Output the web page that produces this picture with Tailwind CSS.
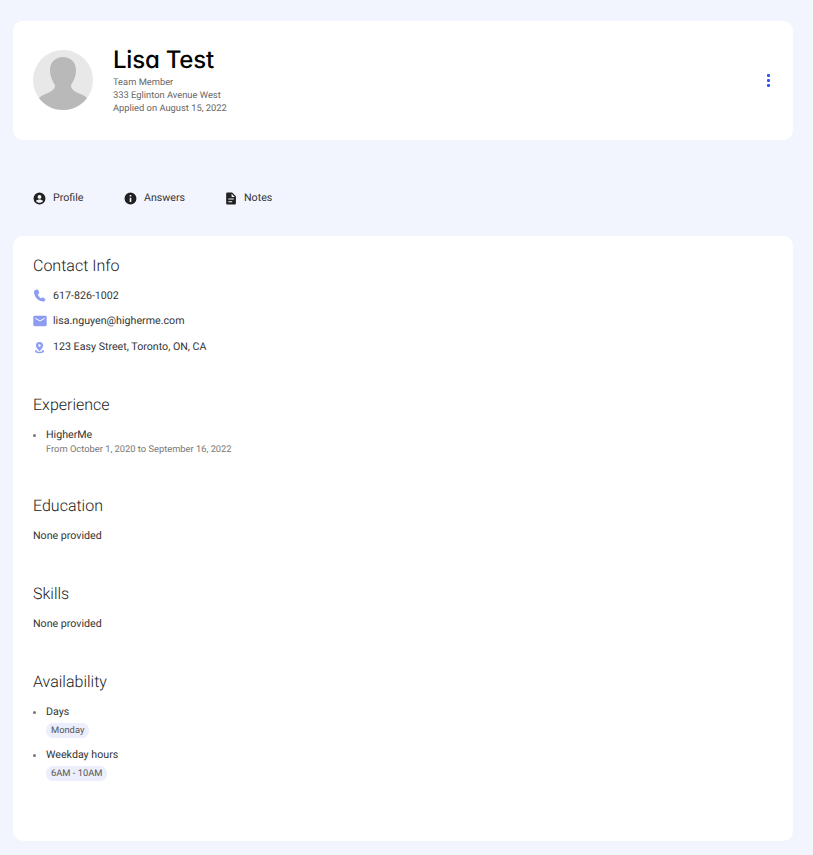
<!DOCTYPE html>
<html lang="en">
<head>
    <meta charset="UTF-8">
    <meta name="viewport" content="width=device-width, initial-scale=1.0">
    <title>Lisa Test - Profile</title>
    <script src="https://cdn.jsdelivr.net/npm/@tailwindcss/browser@4"></script>
</head>
<body class="bg-[#f2f5fe] font-['Roboto',sans-serif] text-[#212121] [text-rendering:geometricPrecision]">
    <div class="h-[855px] overflow-hidden pt-[21px] pl-[13px] pr-[20px]">
        <!-- Header card -->
        <div class="h-[119px] bg-white rounded-[10px] pl-[20px] pr-[23px] flex items-center">
            <svg class="w-[60px] h-[60px] shrink-0 -mt-[1px]" viewBox="0 0 60 60">
                <circle cx="30" cy="30" r="30" fill="#e8e8e8"/>
                <path d="M17 20 C17 12 23 7 30 7 C37 7 43 12 43 20 C43 27 40 32 38 35 C38 39 41 41 45 43 C49 44.500 52 46 54 48 C48.500 55.500 40 60 30 60 C20 60 11.500 55.500 6 48 C8 46 11 44.500 15 43 C19 41 22 39 22 35 C20 32 17 27 17 20 Z" fill="#b9b9b9"/>
            </svg>
            <div class="ml-[20px]">
                <h1 class="font-['Inter',sans-serif] font-medium text-[24px] tracking-[-0.2px] leading-[30px] text-black [font-feature-settings:'cv11']">Lisa Test</h1>
                <div class="mt-[2px] text-[9.33px] leading-[12.7px] text-[#666]">
                    <p>Team Member</p>
                    <p>333 Eglinton Avenue West</p>
                    <p>Applied on August 15, 2022</p>
                </div>
            </div>
            <div class="ml-auto flex flex-col gap-[2px] -mt-[1px]">
                <span class="w-[3px] h-[3px] rounded-[1px] bg-[#3355ee]"></span>
                <span class="w-[3px] h-[3px] rounded-[1px] bg-[#3355ee]"></span>
                <span class="w-[3px] h-[3px] rounded-[1px] bg-[#3355ee]"></span>
            </div>
        </div>

        <!-- Tabs -->
        <div class="h-[96px] pl-[20px] flex items-center text-[10.67px] text-[#333] pt-[20px]">
            <div class="flex items-center gap-[7px] w-[91px]">
                <svg class="w-[13px] h-[13px]" viewBox="0 0 24 24" fill="#212121">
                    <path fill-rule="evenodd" d="M12 1a11 11 0 1 0 0 22 11 11 0 0 0 0-22Zm0 4.500a3.500 3.500 0 1 1 0 7 3.500 3.500 0 0 1 0-7ZM12 20c-2.800 0-5.200-1.300-6.500-3.300 1.500-1.700 4-2.700 6.500-2.700s5 1 6.500 2.700C17.200 18.700 14.800 20 12 20Z"/>
                </svg>
                <span>Profile</span>
            </div>
            <div class="flex items-center gap-[7px] w-[100px]">
                <svg class="w-[13px] h-[13px]" viewBox="0 0 24 24" fill="#212121">
                    <path fill-rule="evenodd" d="M12 1a11 11 0 1 0 0 22 11 11 0 0 0 0-22Zm-1.500 4.500h3v3h-3v-3Zm0 5h3v8h-3v-8Z"/>
                </svg>
                <span>Answers</span>
            </div>
            <div class="flex items-center gap-[7px]">
                <svg class="w-[13px] h-[13px]" viewBox="0 0 24 24" fill="#212121">
                    <path fill-rule="evenodd" d="M6 1h9l7 7v13a2 2 0 0 1-2 2H6a2 2 0 0 1-2-2V3a2 2 0 0 1 2-2Zm8 2v6h6l-6-6ZM8 12v2h10v-2H8Zm0 5v2h7v-2H8Z"/>
                </svg>
                <span>Notes</span>
            </div>
        </div>

        <!-- Main card -->
        <div class="h-[605px] bg-white rounded-[10px] px-[20px] pt-[20px]">
            <section>
                <h2 class="text-[16px] leading-[19px] font-light">Contact Info</h2>
                <ul class="mt-[13px] text-[10.67px] text-[#333]">
                    <li class="h-[16px] flex items-center gap-[7px]">
                        <svg class="w-[13px] h-[13px] -mt-[1px]" viewBox="0 0 24 24" fill="#8c9cf0">
                            <path d="M6.600 1 2 3c-.6 5 1 10 5 14.500S17 23.500 21 23l2-4-5-4-3 2c-2.500-1-5.500-4.500-6-7l2.500-2.500L9.500 1.500Z"/>
                        </svg>
                        <span>617-826-1002</span>
                    </li>
                    <li class="h-[16px] mt-[9px] flex items-center gap-[7px]">
                        <svg class="w-[14px] h-[14px] -ml-[0.5px] -mr-[0.5px]" viewBox="0 0 24 24" fill="#8c9cf0">
                            <path fill-rule="evenodd" d="M3 3h18a2.500 2.500 0 0 1 2.500 2.500v13A2.500 2.500 0 0 1 21 21H3A2.500 2.500 0 0 1 .5 18.500v-13A2.500 2.500 0 0 1 3 3Zm1 5 8 5 8-5v-1.500l-8 4.500-8-4.500V8Z"/>
                        </svg>
                        <span>lisa.nguyen@higherme.com</span>
                    </li>
                    <li class="h-[16px] mt-[10px] flex items-center gap-[7px]">
                        <svg class="w-[13px] h-[13px]" viewBox="0 0 24 24" fill="#8c9cf0">
                            <path fill-rule="evenodd" d="M12 2a6.500 6.500 0 0 0-6.500 6.500C5.500 13 12 19 12 19s6.500-6 6.500-10.500A6.500 6.500 0 0 0 12 2Zm0 4.200a2.300 2.300 0 1 1 0 4.600 2.300 2.300 0 0 1 0-4.600ZM4 17.500l2.500-1 1.200 1.300-1.500.7c1 1 3.300 1.500 5.800 1.500s4.800-.5 5.800-1.500l-1.500-.7 1.200-1.300 2.500 1c.5.300.5 1 .5 1.500 0 2.500-4 3.500-8.500 3.500S3.500 21.500 3.500 19c0-.5 0-1.200.5-1.500Z"/>
                        </svg>
                        <span>123 Easy Street, Toronto, ON, CA</span>
                    </li>
                </ul>
            </section>

            <section class="mt-[40px]">
                <h2 class="text-[16px] leading-[19px] font-light">Experience</h2>
                <ul class="mt-[14px] text-[10.67px]">
                    <li class="flex">
                        <span class="w-[3px] h-[3px] mt-[6px] mr-[10px] rounded-full bg-[#777]"></span>
                        <div>
                            <p class="leading-[14px] text-[#333]">HigherMe</p>
                            <p class="mt-[1px] leading-[14px] text-[9.33px] text-[#777]">From October 1, 2020 to September 16, 2022</p>
                        </div>
                    </li>
                </ul>
            </section>

            <section class="mt-[39px]">
                <h2 class="text-[16px] leading-[19px] font-light">Education</h2>
                <p class="mt-[14px] text-[10.67px] leading-[14px] text-[#333]">None provided</p>
            </section>

            <section class="mt-[41px]">
                <h2 class="text-[16px] leading-[19px] font-light">Skills</h2>
                <p class="mt-[14px] text-[10.67px] leading-[14px] text-[#333]">None provided</p>
            </section>

            <section class="mt-[41px]">
                <h2 class="text-[16px] leading-[19px] font-light">Availability</h2>
                <ul class="mt-[14px] text-[10.67px] text-[#333]">
                    <li class="flex">
                        <span class="w-[3px] h-[3px] mt-[6px] mr-[10px] rounded-full bg-[#777]"></span>
                        <div>
                            <p class="leading-[14px]">Days</p>
                            <span class="block w-fit mt-[4px] h-[15px] leading-[15px] px-[5px] rounded-[7px] bg-[#eceefc] text-[9.33px] text-[#555]">Monday</span>
                        </div>
                    </li>
                    <li class="flex mt-[10px]">
                        <span class="w-[3px] h-[3px] mt-[6px] mr-[10px] rounded-full bg-[#777]"></span>
                        <div>
                            <p class="leading-[14px]">Weekday hours</p>
                            <span class="block w-fit mt-[4px] h-[15px] leading-[15px] px-[5px] rounded-[7px] bg-[#eceefc] text-[9.33px] text-[#555]">6AM - 10AM</span>
                        </div>
                    </li>
                </ul>
            </section>
        </div>
    </div>
</body>
</html>
